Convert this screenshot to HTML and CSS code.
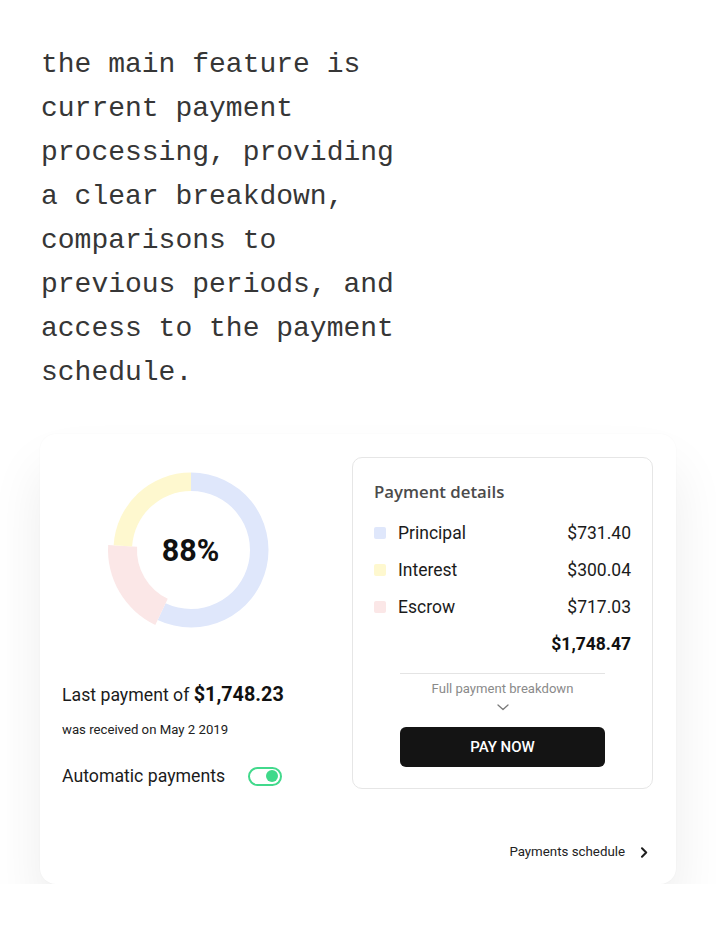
FILE: index.html
```html
<!DOCTYPE html>
<html lang="en">
<head>
<meta charset="utf-8">
<title>Payment overview</title>
<link rel="stylesheet" href="styles.css">
</head>
<body>
<div class="page">
  <p class="intro">the main feature is current payment processing, providing a clear breakdown, comparisons to previous periods, and access to the payment schedule.</p>

  <section class="card">
    <div class="card-main">
      <div class="summary">
        <div class="donut">
          <svg class="donut-chart" width="180" height="180" viewBox="0 0 180 180">
            <path class="seg-blue" d="M90 12.5 A77.5 77.5 0 1 1 56.64 159.95 L64.60 143.25 A59 59 0 1 0 90 31 Z"/>
            <path class="seg-pink" d="M54.27 164.91 A83 83 0 0 1 7.16 84.93 L36.10 86.70 A54 54 0 0 0 66.75 138.74 Z"/>
            <path class="seg-yellow" d="M12.64 85.27 A77.5 77.5 0 0 1 90 12.5 L90 31 A59 59 0 0 0 31.11 86.40 Z"/>
          </svg>
          <span class="donut-value">88%</span>
        </div>
        <p class="last">Last payment of <strong>$1,748.23</strong></p>
        <p class="received">was received on May 2 2019</p>
        <div class="auto">
          <span>Automatic payments</span>
          <span class="toggle"><span class="knob"></span></span>
        </div>
      </div>

      <div class="details">
        <h2 class="details-title">Payment details</h2>
        <ul class="rows">
          <li class="row"><span class="swatch swatch-blue"></span><span class="label">Principal</span><span class="amount">$731.40</span></li>
          <li class="row"><span class="swatch swatch-yellow"></span><span class="label">Interest</span><span class="amount">$300.04</span></li>
          <li class="row"><span class="swatch swatch-pink"></span><span class="label">Escrow</span><span class="amount">$717.03</span></li>
        </ul>
        <div class="total">$1,748.47</div>
        <div class="actions">
          <div class="divider"></div>
          <span class="breakdown">Full payment breakdown</span>
          <svg class="chev-down" width="12" height="7" viewBox="0 0 12 7">
            <path d="M1 1 L6 5.5 L11 1" fill="none" stroke="#7a7a7a" stroke-width="1.3" stroke-linecap="round" stroke-linejoin="round"/>
          </svg>
          <button class="pay" type="button">PAY NOW</button>
        </div>
      </div>
    </div>

    <div class="card-footer">
      <span class="schedule">Payments schedule</span>
      <svg class="chev-right" width="8" height="11" viewBox="0 0 8 11">
        <path d="M2 1.3 L6.2 5.5 L2 9.7" fill="none" stroke="#1e1e1e" stroke-width="2" stroke-linecap="round" stroke-linejoin="round"/>
      </svg>
    </div>
  </section>
</div>
</body>
</html>
```

FILE: styles.css
```css
html, body {
  margin: 0;
  padding: 0;
  background: #ffffff;
}

body {
  font-family: Roboto, "Liberation Sans", sans-serif;
  color: #1b1b1b;
}

.page {
  padding: 43px 40px 0 40px;
}

.intro {
  margin: 0 0 39px 1px;
  width: 21.5ch;
  font-family: "Liberation Mono", "DejaVu Sans Mono", monospace;
  font-size: 28px;
  line-height: 44px;
  color: #363636;
}

.card {
  width: 636px;
  box-sizing: border-box;
  background: #ffffff;
  border-radius: 16px;
  padding: 23px 23px 22px 22px;
  box-shadow: 0 34px 54px rgba(0, 0, 0, 0.075), 0 0 2px rgba(0, 0, 0, 0.03);
}

.card-main {
  display: flex;
}

.summary {
  flex: 1;
  display: flex;
  flex-direction: column;
}

.donut {
  display: grid;
  width: 180px;
  height: 180px;
  margin: 3px 0 0 38.5px;
}

.donut > * {
  grid-area: 1 / 1;
}

.donut-chart {
  display: block;
}

.seg-blue { fill: #dfe7fb; }
.seg-yellow { fill: #fef8cf; }
.seg-pink { fill: #fbe7e7; }

.donut-value {
  place-self: center;
  margin-top: 2px;
  font-size: 30.5px;
  font-weight: 700;
  color: #111111;
  line-height: 1;
}

.last {
  margin: 43px 0 0;
  font-size: 17.7px;
  line-height: 24px;
  color: #1b1b1b;
}

.last strong {
  font-size: 19.8px;
  font-weight: 700;
  color: #111111;
}

.received {
  margin: 14px 0 0;
  font-size: 13.2px;
  line-height: 18px;
  color: #222222;
}

.auto {
  margin-top: 25px;
  display: flex;
  align-items: center;
  gap: 23px;
  font-size: 17.7px;
  line-height: 24px;
  color: #1b1b1b;
}

.toggle {
  width: 34px;
  height: 19px;
  box-sizing: border-box;
  border: 2px solid #42d98c;
  border-radius: 10px;
  display: flex;
  align-items: center;
  justify-content: flex-end;
  padding: 0 2px;
}

.knob {
  width: 12px;
  height: 12px;
  border-radius: 50%;
  background: #3fd98a;
}

.details {
  width: 301px;
  box-sizing: border-box;
  border: 1px solid #e6e6e6;
  border-radius: 10px;
  padding: 23px 21px 21px 21px;
}

.details-title {
  margin: 0;
  font-family: "Open Sans", Roboto, sans-serif;
  font-size: 16.8px;
  font-weight: 600;
  line-height: 22px;
  color: #4b4b4b;
}

.rows {
  list-style: none;
  margin: 11.5px 0 0;
  padding: 0;
}

.row {
  display: flex;
  align-items: center;
  height: 37px;
  font-size: 17.5px;
  color: #1b1b1b;
}

.swatch {
  width: 12px;
  height: 12px;
  border-radius: 2px;
  margin-right: 12px;
}

.swatch-blue { background: #dfe7fb; }
.swatch-yellow { background: #fef8cf; }
.swatch-pink { background: #fbe7e7; }

.amount {
  margin-left: auto;
}

.total {
  height: 36px;
  line-height: 36px;
  text-align: right;
  font-size: 17.5px;
  font-weight: 700;
  color: #111111;
}

.actions {
  width: 205px;
  margin: 11.5px auto 0;
  display: flex;
  flex-direction: column;
  align-items: center;
}

.divider {
  width: 100%;
  height: 1px;
  background: #e4e4e4;
}

.breakdown {
  margin-top: 7px;
  font-size: 13.1px;
  line-height: 16px;
  color: #8a8a8a;
}

.chev-down {
  display: block;
  margin-top: 7px;
}

.pay {
  margin-top: 16px;
  width: 100%;
  height: 40px;
  border: 0;
  border-radius: 6px;
  background: #141414;
  color: #ffffff;
  font-family: Roboto, sans-serif;
  font-size: 15px;
  font-weight: 500;
  cursor: pointer;
}

.card-footer {
  margin-top: 53px;
  display: flex;
  justify-content: flex-end;
  align-items: center;
  gap: 15px;
  padding-right: 5px;
  font-size: 13.3px;
  line-height: 20px;
  color: #222222;
}

.chev-right {
  display: block;
}
```
